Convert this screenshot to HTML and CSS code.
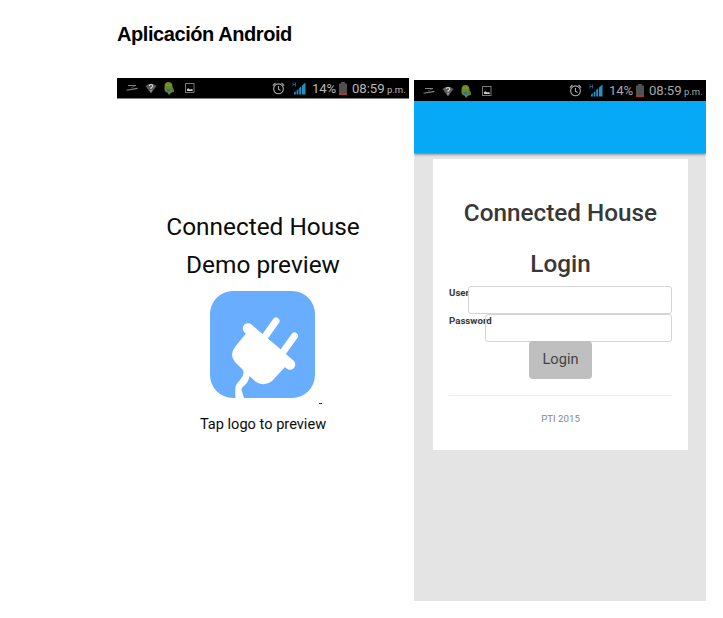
FILE: index.html
```html
<!DOCTYPE html>
<html lang="es">
<head>
<meta charset="utf-8">
<title>Aplicación Android</title>
<link rel="stylesheet" href="styles.css">
</head>
<body>
<svg class="sprites" width="0" height="0">
  <symbol id="notifications" viewBox="0 0 71 14">
    <path d="M3 4.500h8M1.500 9.300l11-1.900" fill="none" stroke="#858585" stroke-width="1.1"/>
    <path d="M6 7l4-2" fill="none" stroke="#444"/>
    <path d="M20.500 5Q26 .6 31.500 5L26 12.500Z" fill="#5c5c5c"/>
    <path d="M24.200 5Q24.400 3.500 26 3.500T27.700 5Q27.700 5.900 26 6.900V8M26 9.200v1.200" fill="none" stroke="#ddd" stroke-width="1.1"/>
    <path d="M39.500 5.500Q39.500 1 43.500 1T47.500 5.500V10Q47 12 45.500 12L45 13.500H43.500L43 12Q39.800 11 39.500 9Z" fill="#6b8a24"/>
    <path d="M46.500 6q3 1 2.500 5l-2.500 .5z" fill="#5d7a20"/>
    <path d="M41.500 7.500l2 .8 2-.8-.5 3h-3z" fill="#2f6da8"/>
    <path d="M41.500 4h1m2 0h1" stroke="#a9bd70"/>
    <rect x="60.500" y="2.500" width="8.500" height="9" fill="none" stroke="#777"/>
    <path d="M62 10V8l1.500-.8 1.500 1.200 1-.5 1.700.7V10z" fill="#c8c8c8"/>
  </symbol>
  <symbol id="alarm" viewBox="0 0 13 13">
    <g fill="none" stroke="#aaa" stroke-width="1.100">
      <circle cx="6.500" cy="6.800" r="4.900"/>
      <path d="M6.500 4v3.300l2 1.200M.8 3.600L3.500 1M12.200 3.600L9.500 1"/>
    </g>
  </symbol>
  <symbol id="signal" viewBox="0 0 14 13">
    <path d="M1 .5v4M3.500 .5v4M1 2.500h2.500" fill="none" stroke="#17668f" stroke-width=".9"/>
    <path d="M2 12.500V10.500l1.800-1.200v3.200zM4.600 12.500V8.500l1.800-1.600v5.600zM7.200 12.500V6l2-1.800v8.300zM10 12.500V3.500l3.500-3v12z" fill="#238fc6"/>
  </symbol>
  <symbol id="battery" viewBox="0 0 8 13">
    <path d="M0 1.500h2V0h4v1.500h2V13H0z" fill="#505050"/>
    <path d="M0 11h8v2H0z" fill="#b43618"/>
  </symbol>
</svg>

<h1 class="heading">Aplicación Android</h1>
<main class="screens">
  <section class="phone splash">
    <div class="status">
      <svg class="notifications"><use href="#notifications"/></svg>
      <svg class="alarm"><use href="#alarm"/></svg>
      <svg class="signal"><use href="#signal"/></svg>
      <span class="percent">14%</span>
      <svg class="battery"><use href="#battery"/></svg>
      <span class="time">08:59</span>
      <span class="period">p.m.</span>
    </div>
    <div class="intro">
      <p class="intro-title">Connected House</p>
      <p class="intro-title demo">Demo preview</p>
      <div class="logo-box">
        <svg class="logo" viewBox="0 0 105 107">
          <rect width="105" height="107" rx="23" fill="#69adff"/>
          <g fill="none" stroke="#fff" stroke-linecap="round">
            <path d="M54 47L66 30M73 61L84.500 45" stroke-width="7"/>
            <path d="M38 37.500L80 73.500" stroke-width="10.500"/>
          </g>
          <path d="M38 40L57 47L75 62L75 76L62 90Q55 96 46 91L39.500 85Q39 90 35 94Q31 97 31.500 99L34 107H25.500Q25 100 25.500 96Q26 93 30 89Q35 84 33 79L25 71Q19 64 25 56Z" fill="#fff"/>
        </svg>
        <i class="mark"></i>
      </div>
      <p class="hint">Tap logo to preview</p>
    </div>
  </section>

  <section class="phone app">
    <div class="status">
      <svg class="notifications"><use href="#notifications"/></svg>
      <svg class="alarm"><use href="#alarm"/></svg>
      <svg class="signal"><use href="#signal"/></svg>
      <span class="percent">14%</span>
      <svg class="battery"><use href="#battery"/></svg>
      <span class="time">08:59</span>
      <span class="period">p.m.</span>
    </div>
    <div class="toolbar"></div>
    <form class="card">
      <h2 class="card-title">Connected House</h2>
      <h2 class="card-title login-title">Login</h2>
      <div class="field"><label class="user" for="user">User</label><input id="user" type="text"></div>
      <div class="field"><label class="password" for="password">Password</label><input id="password" type="password"></div>
      <button class="submit" type="button">Login</button>
      <footer class="footer">PTI 2015</footer>
    </form>
  </section>
</main>
</body>
</html>
```
FILE: styles.css
```css
* { box-sizing: border-box; }
body {
  margin: 0;
  height: 618px;
  overflow: hidden;
  background: #fff;
  font-family: Roboto, sans-serif;
}
p, h1, h2 { margin: 0; }
.sprites { position: absolute; }
.heading {
  height: 78px;
  padding: 22px 0 0 117px;
  font: bold 20px/24px "Liberation Sans", Arial, sans-serif;
  letter-spacing: -.43px;
  color: #000;
}
.screens { display: flex; gap: 5px; padding-left: 117px; }
.phone { width: 292px; }

.status {
  display: flex;
  align-items: center;
  height: 21px;
  padding-left: 8px;
  background: #000;
  color: #b9b9b9;
  white-space: nowrap;
}
.status svg, .status span { flex: none; display: block; }
.notifications { width: 71px; height: 14px; }
.alarm { width: 13px; height: 13px; margin-left: 76px; }
.signal { width: 14px; height: 13px; margin-left: 7px; }
.percent { width: 24px; margin-left: 6px; padding-top: 1px; font-size: 13.2px; line-height: 20px; letter-spacing: -.2px; }
.battery { width: 8px; height: 13px; margin: 0 0 0 3px; }
.time { width: 33px; margin-left: 5px; padding-top: 1px; font-size: 13.2px; line-height: 20px; letter-spacing: -.05px; }
.period { margin-left: 2px; padding-top: 2px; font-size: 9.5px; line-height: 17px; }

.splash .status { border-bottom: 1px solid #858585; }
.app .status { color: #a8a8a8; }
.intro {
  display: flex;
  flex-direction: column;
  align-items: center;
  padding-top: 109px;
  color: #0b0b0b;
}
.intro-title { font-size: 24.4px; line-height: 38px; }
.logo-box { position: relative; left: -1px; width: 105px; height: 107px; margin-top: 7px; }
.logo { display: block; width: 105px; height: 107px; }
.mark {
  position: absolute;
  left: 109px;
  top: 112px;
  width: 3px;
  height: 1px;
  background: #2020e8;
}
.hint { margin-top: 16px; font-size: 14.6px; line-height: 20px; }

.app { height: 521px; margin-top: 2px; background: #e4e4e4; }
.toolbar {
  height: 52px;
  background: #05a9f5;
  box-shadow: 0 1px 3px rgba(0, 0, 0, .6);
  clip-path: inset(0 0 -8px 0);
}
.card {
  display: flex;
  flex-direction: column;
  width: 255px;
  height: 291px;
  margin: 6px 0 0 19px;
  padding: 35px 16px 0;
  background: #fff;
  color: #383838;
}
.card-title { text-align: center; font-size: 24.3px; font-weight: 500; line-height: 38px; white-space: nowrap; }
.login-title { margin-top: 13px; }
.field { display: flex; height: 28px; }
.field:first-of-type { margin-top: 3px; }
.field label { font-size: 9.7px; font-weight: 700; line-height: 14px; white-space: nowrap; }
.user { width: 19px; }
.password { width: 36px; }
.field input {
  flex: 1;
  min-width: 0;
  height: 28px;
  border: 1px solid #d4d4d4;
  border-radius: 3px;
  background: transparent;
}
.submit {
  align-self: center;
  width: 63px;
  height: 38px;
  margin-top: -1px;
  padding: 0 0 2px;
  border: 0;
  border-radius: 4px;
  background: #bfbfbf;
  color: #444;
  font: 14.6px Roboto, sans-serif;
}
.footer {
  margin-top: 16px;
  padding-top: 16px;
  border-top: 1px solid #eee;
  text-align: center;
  font-size: 9.7px;
  line-height: 14px;
  color: #888;
}
```
